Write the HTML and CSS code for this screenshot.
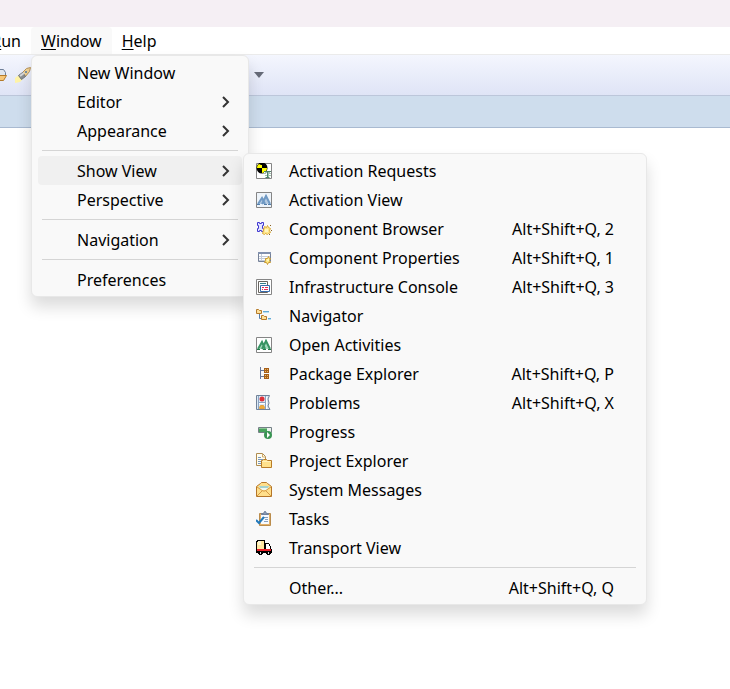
FILE: index.html
```html
<!DOCTYPE html>
<html lang="en">
<head>
    <meta charset="UTF-8">
    <meta name="viewport" content="width=device-width, initial-scale=1.0">
    <title>Workbench</title>
    <link rel="stylesheet" href="styles.css">
</head>

<body>
    <div class="titlebar"></div>

    <nav class="menubar">
        <div class="menubar-entry run">
            <button class="menubar-btn"><u>R</u>un</button>
        </div>
        <div class="menubar-entry">
            <button class="menubar-btn open"><u>W</u>indow</button>

            <ul class="menu">
                <li><button class="item"><span class="icon"></span>New Window</button></li>
                <li><button class="item"><span class="icon"></span>Editor<svg class="arrow" viewBox="0 0 8 12"><path d="M1 1l5 5-5 5"/></svg></button></li>
                <li><button class="item"><span class="icon"></span>Appearance<svg class="arrow" viewBox="0 0 8 12"><path d="M1 1l5 5-5 5"/></svg></button></li>
                <li class="line"></li>
                <li class="has-sub">
                    <button class="item active"><span class="icon"></span>Show View<svg class="arrow" viewBox="0 0 8 12"><path d="M1 1l5 5-5 5"/></svg></button>

                    <ul class="menu submenu">
                        <li><button class="item">
                            <svg class="icon" viewBox="0 0 16 16">
                                <path fill="#fff" stroke="#858585" d="M.5.5h15v15H.5z"/>
                                <circle cx="6" cy="5" r="5.500" fill="#000"/>
                                <path fill="#ff0" d="M6 5H1a5 5 0 0 1 3-4.500L6 1zM6 5h5a5 5 0 0 1-5 5z"/>
                                <path fill="#000" d="M3 0h5v2H5L3 1z"/>
                                <path fill="#fff" d="M8 9h7v6H8z"/>
                                <path fill="none" stroke="#50836a" d="M8 8.500h7M11.500 9v5M9.500 14.500h4M8.500 11l2-2M14.500 11l-2-2"/>
                                <path stroke="#9fc3ad" d="M9 12.500h2M13 12.500h2M12.500 10v4"/>
                            </svg>Activation Requests</button></li>
                        <li><button class="item">
                            <svg class="icon" viewBox="0 0 16 16">
                                <path fill="#eef4fa" stroke="#858585" d="M.5.5h15v15H.5z"/>
                                <path fill="#b5cbe2" d="M2 12l4-7 2 3 2-5 4 9z"/>
                                <path fill="none" stroke="#6f99c4" stroke-width="2" d="M2 12l4-6 3 6M6 12l4-8 4 8"/>
                                <path stroke="#537eaa" d="M1 12.500h3M8 12.500h3M12 12.500h3"/>
                            </svg>Activation View</button></li>
                        <li><button class="item">
                            <svg class="icon" viewBox="0 0 16 16">
                                <path fill="#e4e5ff" stroke="#4038d0" d="M1.500 1.500h2v1h2v-1h2v3h-1v3h1v3h-2v-1h-2v1h-2v-3h1v-3h-1z"/>
                                <path fill="#ffe68a" stroke="#d9a93a" d="M8.500 5.500l2 1 1-2 1 2 2 1-1 2 1 2-2 1-1 1-2-1-1 1-2-1z"/>
                                <path fill="#fff5c0" d="M9 8h3v3H9z"/>
                                <path fill="#876223" d="M14 4h1v1h-1zM15 9h1v1h-1zM13 13h1v1h-1z"/>
                            </svg>Component Browser<kbd>Alt+Shift+Q, 2</kbd></button></li>
                        <li><button class="item">
                            <svg class="icon" viewBox="0 0 16 16">
                                <path fill="#fff" stroke="#758198" d="M2.500 2.500h12v9h-12z"/>
                                <path fill="#8291ae" d="M2 2h13v2H2z"/>
                                <path stroke="#c3cbd8" d="M3 6.500h11M3 8.500h8M3 10.500h8M5.500 4v7"/>
                                <path fill="#ffe880" stroke="#c99a35" d="M9.500 8.500h2l1-2 1 2h1l-1 2 1 2h-2l-1 2-1-2h-2l1-2z"/>
                                <path fill="#fff7b5" d="M11 9h2v2h-2z"/>
                            </svg>Component Properties<kbd>Alt+Shift+Q, 1</kbd></button></li>
                        <li><button class="item">
                            <svg class="icon" viewBox="0 0 16 16">
                                <path fill="#fff" stroke="#858585" d="M.5.5h15v15H.5z"/>
                                <path fill="#fff" stroke="#68645f" d="M2.500 2.500h9v11h-9z"/>
                                <path stroke="#357e8b" d="M4 4.500h6"/>
                                <path fill="#fff" stroke="#386cac" d="M4.500 6.500h9v6h-9z"/>
                                <path stroke="#e82b58" d="M6 8.500h2m1 0h3M6 10.500h1m1 0h4"/>
                            </svg>Infrastructure Console<kbd>Alt+Shift+Q, 3</kbd></button></li>
                        <li><button class="item">
                            <svg class="icon" viewBox="0 0 16 16">
                                <path fill="none" stroke="#547daa" d="M3.500 6v4.500h2"/>
                                <path fill="#ffe09a" stroke="#b57b2b" d="M.5 1.500h2l1 1h2v3h-5zM5.500 7.500h2l1 1h2v3h-5z"/>
                                <path stroke="#64a9d5" d="M7 3.500h6M12 10.500h3"/>
                                <path stroke="#b8dff2" d="M7 4.500h6M12 11.500h3"/>
                            </svg>Navigator</button></li>
                        <li><button class="item">
                            <svg class="icon" viewBox="0 0 16 16">
                                <path fill="#fff" stroke="#858585" d="M.5.5h15v15H.5z"/>
                                <path fill="#a2d8bb" d="M2 12l4-8 2 3 2-5 4 10z"/>
                                <path fill="none" stroke="#389463" stroke-width="2" d="M2 12l4-7 3 7M6 12l4-8 4 8"/>
                                <path stroke="#267c4b" d="M1 12.500h3M7 12.500h3M12 12.500h3"/>
                            </svg>Open Activities</button></li>
                        <li><button class="item">
                            <svg class="icon" viewBox="0 0 16 16">
                                <path fill="none" stroke="#68779a" d="M4.500 1v12M5 4.500h3M5 10.500h3"/>
                                <path fill="#a75f1a" d="M8 2h5v5H8zM8 8h5v5H8z"/>
                                <path fill="#eaba65" d="M9 3h1v1H9zM11 3h1v1h-1zM9 5h1v1H9zM11 5h1v1h-1zM9 9h1v1H9zM11 9h1v1h-1zM9 11h1v1H9zM11 11h1v1h-1z"/>
                            </svg>Package Explorer<kbd>Alt+Shift+Q, P</kbd></button></li>
                        <li><button class="item">
                            <svg class="icon" viewBox="0 0 16 16">
                                <path fill="#dce9f5" stroke="#718299" d="M.5.5h13L12 4l1 4-1 3 2 3.500H.5z"/>
                                <path stroke="#8ca4c2" d="M2.500 1v13M9.500 1v13M3 7.500h6"/>
                                <path stroke="#fff" d="M3 8.500h6M10.500 2v12"/>
                                <circle cx="6" cy="4" r="2.500" fill="#df3038"/>
                                <path fill="#f2ad37" stroke="#e0a040" d="M3.500 12.500l1-2h3l1 2v1h-5z"/>
                            </svg>Problems<kbd>Alt+Shift+Q, X</kbd></button></li>
                        <li><button class="item">
                            <svg class="icon" viewBox="0 0 16 16">
                                <path fill="#eef4ef" stroke="#748086" d="M2.500 3.500h13v5h-13z"/>
                                <path fill="#48a35c" d="M3 4h8v4H3z"/>
                                <path fill="#8bc593" d="M3 4h8v1H3z"/>
                                <circle cx="12" cy="11" r="4" fill="#399452"/>
                                <path fill="#fff" d="M11 8l3 3-3 3z"/>
                            </svg>Progress</button></li>
                        <li><button class="item">
                            <svg class="icon" viewBox="0 0 16 16">
                                <path fill="#fffdf0" stroke="#af8c51" d="M.5.5h6l3 3v9h-9z"/>
                                <path fill="none" stroke="#d1ab6b" d="M6.500 1v3h3"/>
                                <path stroke="#7897bb" d="M2 4.500h3M2 6.500h5M2 8.500h3M2 10.500h3"/>
                                <path fill="#ffe18c" stroke="#b97c27" d="M5.500 7.500h1l1-1h3l1 1h4v7h-10z"/>
                                <path stroke="#fff0b9" d="M6 8.500h9"/>
                            </svg>Project Explorer</button></li>
                        <li><button class="item">
                            <svg class="icon" viewBox="0 0 16 16">
                                <path fill="#ffdf8b" stroke="#b57629" d="M.5 14.500V4.500l4-3 1-1h5l1 1 4 3v10z"/>
                                <path fill="#eff9f2" d="M3 4h10l-2 4H5z"/>
                                <path fill="#a5d2cd" d="M3 4h10l-1 2H4z"/>
                                <path fill="none" stroke="#d69a45" d="M1 5l6 4h2l6-4M1 14l5-5M15 14l-5-5"/>
                            </svg>System Messages</button></li>
                        <li><button class="item">
                            <svg class="icon" viewBox="0 0 16 16">
                                <path fill="#e4b16a" stroke="#ba8c4c" d="M3.500 2.500h11v12h-11z"/>
                                <path fill="#f7faff" d="M5 4h8v9H5z"/>
                                <path fill="#899ab4" stroke="#6f819e" d="M5.500 3.500v-1h2l1-2h1l1 2h2v1z"/>
                                <path stroke="#89a1be" d="M8 6.500h4M9 8.500h3M8 10.500h4"/>
                                <path fill="none" stroke="#2279bb" stroke-width="2" d="M0 9l3 3 5-6"/>
                            </svg>Tasks</button></li>
                        <li><button class="item">
                            <svg class="icon" viewBox="0 0 16 16" shape-rendering="crispEdges">
                                <path fill="#ffe8a1" stroke="#000" d="M1.500.5h7v9h-8v-8h1z"/>
                                <path fill="#fff7d4" d="M2 1h3v4H2z"/>
                                <path fill="#fff" stroke="#000" d="M9.500 3.500h3l2 3v3h-5z"/>
                                <path fill="#000" d="M0 9h16v4H0z"/>
                                <path fill="#ec1e27" d="M1 9h14v2H1z"/>
                                <path fill="#fff" d="M11 5h2v2h-2z"/>
                                <path fill="#000" d="M3 11h3v1h1v2H6v1H3v-1H2v-2h1zM11 11h3v1h1v2h-1v1h-3v-1h-1v-2h1z"/>
                                <path fill="#ddd" d="M4 12h1v2H4zM12 12h1v2h-1z"/>
                            </svg>Transport View</button></li>
                        <li class="line"></li>
                        <li><button class="item"><span class="icon"></span>Other...<kbd>Alt+Shift+Q, Q</kbd></button></li>
                    </ul>
                </li>
                <li><button class="item"><span class="icon"></span>Perspective<svg class="arrow" viewBox="0 0 8 12"><path d="M1 1l5 5-5 5"/></svg></button></li>
                <li class="line"></li>
                <li><button class="item"><span class="icon"></span>Navigation<svg class="arrow" viewBox="0 0 8 12"><path d="M1 1l5 5-5 5"/></svg></button></li>
                <li class="line"></li>
                <li><button class="item"><span class="icon"></span>Preferences</button></li>
            </ul>
        </div>
        <div class="menubar-entry">
            <button class="menubar-btn"><u>H</u>elp</button>
        </div>
    </nav>

    <div class="toolbar">
        <button class="tool" aria-label="Open type">
            <svg viewBox="0 0 16 16">
                <path fill="#dfe6f0" stroke="#6f7f99" d="M6.500 5.500l2-3h4l2 3v3h-8z"/>
                <path fill="#f8c777" stroke="#b37a2b" d="M.5 8.500h15l-3 5h-12z"/>
            </svg>
        </button>
        <button class="tool" aria-label="Search">
            <svg viewBox="0 0 16 16">
                <path fill="#fff4a8" d="M0 11l4-3 4 4-3 3-5 1z"/>
                <path fill="#f4d394" stroke="#b6935a" d="M7.500 5.500l4-4 4-1-1 4-4 5z"/>
                <path fill="#8c8f91" stroke="#73787f" d="M3.500 8.500l4-3 3 4-4 3z"/>
                <path stroke="#d5d7da" stroke-width="2" d="M5 9l4-3"/>
                <circle cx="11" cy="5" r="1" fill="#527da5"/>
            </svg>
        </button>
        <button class="tool drop" aria-label="More">
            <svg viewBox="0 0 10 6"><path fill="#666b78" d="M0 0h10L5 6z"/></svg>
        </button>
    </div>
    <div class="tabs"></div>
    <main class="workspace"></main>
</body>
</html>
```
FILE: styles.css
```css
*{box-sizing: border-box;}
body{
    margin: 0;
    min-height: 100vh;
    display: flex;
    flex-direction: column;
    overflow: hidden;
    background-color: white;
    color: black;
    font: 16px/20px "Noto Sans", "Open Sans", sans-serif;
}
button{
    font: inherit;
    color: inherit;
    background: none;
    border: none;
    padding: 0;
}
ul{list-style: none; margin: 0; padding: 0;}
u{text-decoration-thickness: 1px; text-underline-offset: 2px;}

.titlebar{height: 27px; background-color: #f5eff4;}

.menubar{display: flex; height: 28px; margin-left: -20px; border-bottom: 1px solid #ebebeb;}
.menubar-entry{position: relative;}
.menubar-entry.run{width: 51px; text-align: right;}
.menubar-btn{height: 27px; padding: 0 10px; border-radius: 4px 4px 0 0;}
.menubar-btn.open{background-color: #f9f9f9;}

.toolbar{
    display: flex;
    align-items: center;
    gap: 8px;
    height: 41px;
    margin-left: -9px;
    background: linear-gradient(#f4f6fe, #dfe4f6);
    border-bottom: 1px solid #bcc6da;
}
.tool{display: flex;}
.tool svg{width: 16px; height: 16px;}
.tool.drop{margin-left: 215px;}
.tool.drop svg{width: 10px; height: 6px;}

.tabs{height: 32px; background-color: #cedded; border-bottom: 1px solid #a9bad1;}
.workspace{flex: 1;}

.menu{
    position: absolute;
    z-index: 1;
    top: 28px;
    left: 0;
    width: 218px;
    padding: 2px 6px;
    background-color: #f9f9f9;
    border: 1px solid #e8e8e8;
    border-radius: 6px;
    box-shadow: 0 10px 16px rgba(0, 0, 0, 0.14);
}
.has-sub{position: relative;}
.submenu{top: -3px; left: calc(100% + 1px); width: 404px;}

.item{
    display: flex;
    align-items: center;
    width: 100%;
    height: 29px;
    padding: 0 12px 0 6px;
    border-radius: 4px;
    text-align: left;
    white-space: nowrap;
}
.item:hover, .item.active{background-color: #f0f0f0;}
.icon{flex: none; width: 16px; height: 16px; margin-right: 17px;}
.arrow{
    width: 8px;
    height: 12px;
    margin-left: auto;
    fill: none;
    stroke: #333;
    stroke-width: 2;
}
.item kbd{margin-left: auto; padding-right: 14px; font: inherit;}
.line{height: 1px; margin: 5px 4px; background-color: #d5d5d5;}
```
